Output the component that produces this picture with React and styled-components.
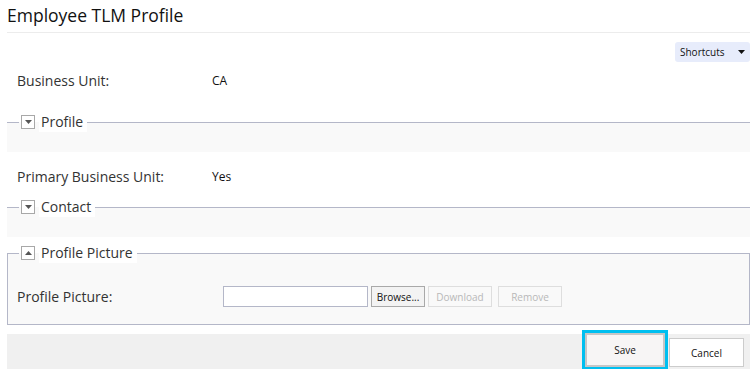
import React from 'react';
import styled, { createGlobalStyle } from 'styled-components';

const GlobalStyle = createGlobalStyle`
  body {
    margin: 0;
    background: #ffffff;
    font-family: 'Open Sans', 'Liberation Sans', sans-serif;
    color: #333333;
    overflow: hidden;
  }
`;

const Page = styled.div`
  padding: 0 4px 0 7px;
`;

const Title = styled.h1`
  margin: 0;
  height: 32px;
  line-height: 30px;
  font-size: 17.5px;
  font-weight: 400;
  color: #111111;
  border-bottom: 1px solid #ececec;
`;

const Toolbar = styled.div`
  display: flex;
  justify-content: flex-end;
  margin-top: 9px;
`;

const ShortcutsButton = styled.button`
  display: flex;
  align-items: center;
  justify-content: space-between;
  width: 75px;
  height: 20px;
  padding: 0 5px 0 5px;
  border: none;
  border-radius: 3px;
  background: #e7ecfb;
  font-family: inherit;
  font-size: 10px;
  color: #111111;
`;

const Row = styled.div`
  display: flex;
  align-items: center;
  height: ${({ $height }) => $height || 20}px;
  padding: ${({ $pad }) => $pad};
`;

const Label = styled.div`
  width: ${({ $width }) => $width}px;
  flex-shrink: 0;
  font-size: 14px;
  color: #333333;
`;

const Value = styled.div`
  font-size: 12px;
  color: #111111;
`;

const Section = styled.fieldset`
  margin: ${({ $margin }) => $margin || '0'};
  padding: 0 0 ${({ $bottom }) => $bottom}px 0;
  min-inline-size: 0;
  background: #f9f9f9;
  border: none;
  border-top: 1px solid #b4b7c8;
  ${({ $boxed }) =>
    $boxed &&
    `
    border: 1px solid #b4b7c8;
  `}
`;

const Legend = styled.legend`
  display: flex;
  align-items: center;
  height: 20px;
  margin-left: ${({ $boxed }) => ($boxed ? 11 : 12)}px;
  padding: 0 0 0 2px;
`;

const Toggle = styled.span`
  display: flex;
  align-items: center;
  justify-content: center;
  width: 12px;
  height: 12px;
  border: 1px solid #a8a8a8;
  background: #ffffff;
`;

const LegendText = styled.span`
  height: 20px;
  line-height: 19px;
  margin-left: 4px;
  padding: 0 4px 0 2px;
  background: #ffffff;
  font-size: 14px;
  color: #333333;
`;

const TextBox = styled.div`
  width: 143px;
  height: 19px;
  border: 1px solid #b4b7c8;
  background: #ffffff;
`;

const SmallButton = styled.button`
  height: 21px;
  width: ${({ $width }) => $width}px;
  margin-left: ${({ $gap }) => $gap}px;
  padding: 0;
  font-family: inherit;
  font-size: 10px;
  border: 1px solid ${({ disabled }) => (disabled ? '#dedede' : '#a9a9a9')};
  background: ${({ disabled }) => (disabled ? '#f9f9f9' : '#f3f3f3')};
  color: ${({ disabled }) => (disabled ? '#b8b8b8' : '#111111')};
`;

const Footer = styled.div`
  display: flex;
  justify-content: flex-end;
  align-items: flex-end;
  gap: 4px;
  height: 35px;
  margin-top: 9px;
  padding: 0 6px 2px 0;
  box-sizing: border-box;
  background: #f0f0f0;
`;

const FooterButton = styled.button`
  width: ${({ $primary }) => ($primary ? 80 : 75)}px;
  height: ${({ $primary }) => ($primary ? 34 : 29)}px;
  padding: 0;
  font-family: inherit;
  font-size: 10px;
  color: #111111;
  background: ${({ $primary }) => ($primary ? '#f7f5f5' : '#ffffff')};
  border: ${({ $primary }) => ($primary ? '2px solid #c6c6c6' : '1px solid #cccccc')};
  outline: ${({ $primary }) => ($primary ? '3px solid #00bff0' : 'none')};
`;

const Caret = ({ up, color = '#555555' }) => (
  <svg width="7" height="4" viewBox="0 0 7 4">
    <path d={up ? 'M0 4 L3.5 0 L7 4 Z' : 'M0 0 L7 0 L3.5 4 Z'} fill={color} />
  </svg>
);

const SectionHead = ({ title, up, boxed }) => (
  <Legend $boxed={boxed}>
    <Toggle>
      <Caret up={up} />
    </Toggle>
    <LegendText>{title}</LegendText>
  </Legend>
);

export default function App() {
  return (
    <Page>
      <GlobalStyle />
      <Title>Employee TLM Profile</Title>
      <Toolbar>
        <ShortcutsButton>
          Shortcuts
          <Caret color="#111111" />
        </ShortcutsButton>
      </Toolbar>

      <Row $pad="8px 0 0 10px">
        <Label $width={195}>Business Unit:</Label>
        <Value>CA</Value>
      </Row>

      <Section $margin="22px 0 0 0" $bottom={20}>
        <SectionHead title="Profile" />
      </Section>

      <Row $pad="14px 0 11px 10px">
        <Label $width={195}>Primary Business Unit:</Label>
        <Value>Yes</Value>
      </Row>

      <Section $bottom={20}>
        <SectionHead title="Contact" />
      </Section>

      <Section $boxed $margin="6px 0 0 0" $bottom={17}>
        <SectionHead title="Profile Picture" up boxed />
        <Row $pad="23px 0 0 9px" $height={21}>
          <Label $width={206}>Profile Picture:</Label>
          <TextBox />
          <SmallButton $width={54} $gap={3}>Browse...</SmallButton>
          <SmallButton $width={64} $gap={3} disabled>Download</SmallButton>
          <SmallButton $width={64} $gap={6} disabled>Remove</SmallButton>
        </Row>
      </Section>

      <Footer>
        <FooterButton $primary>Save</FooterButton>
        <FooterButton>Cancel</FooterButton>
      </Footer>
    </Page>
  );
}
